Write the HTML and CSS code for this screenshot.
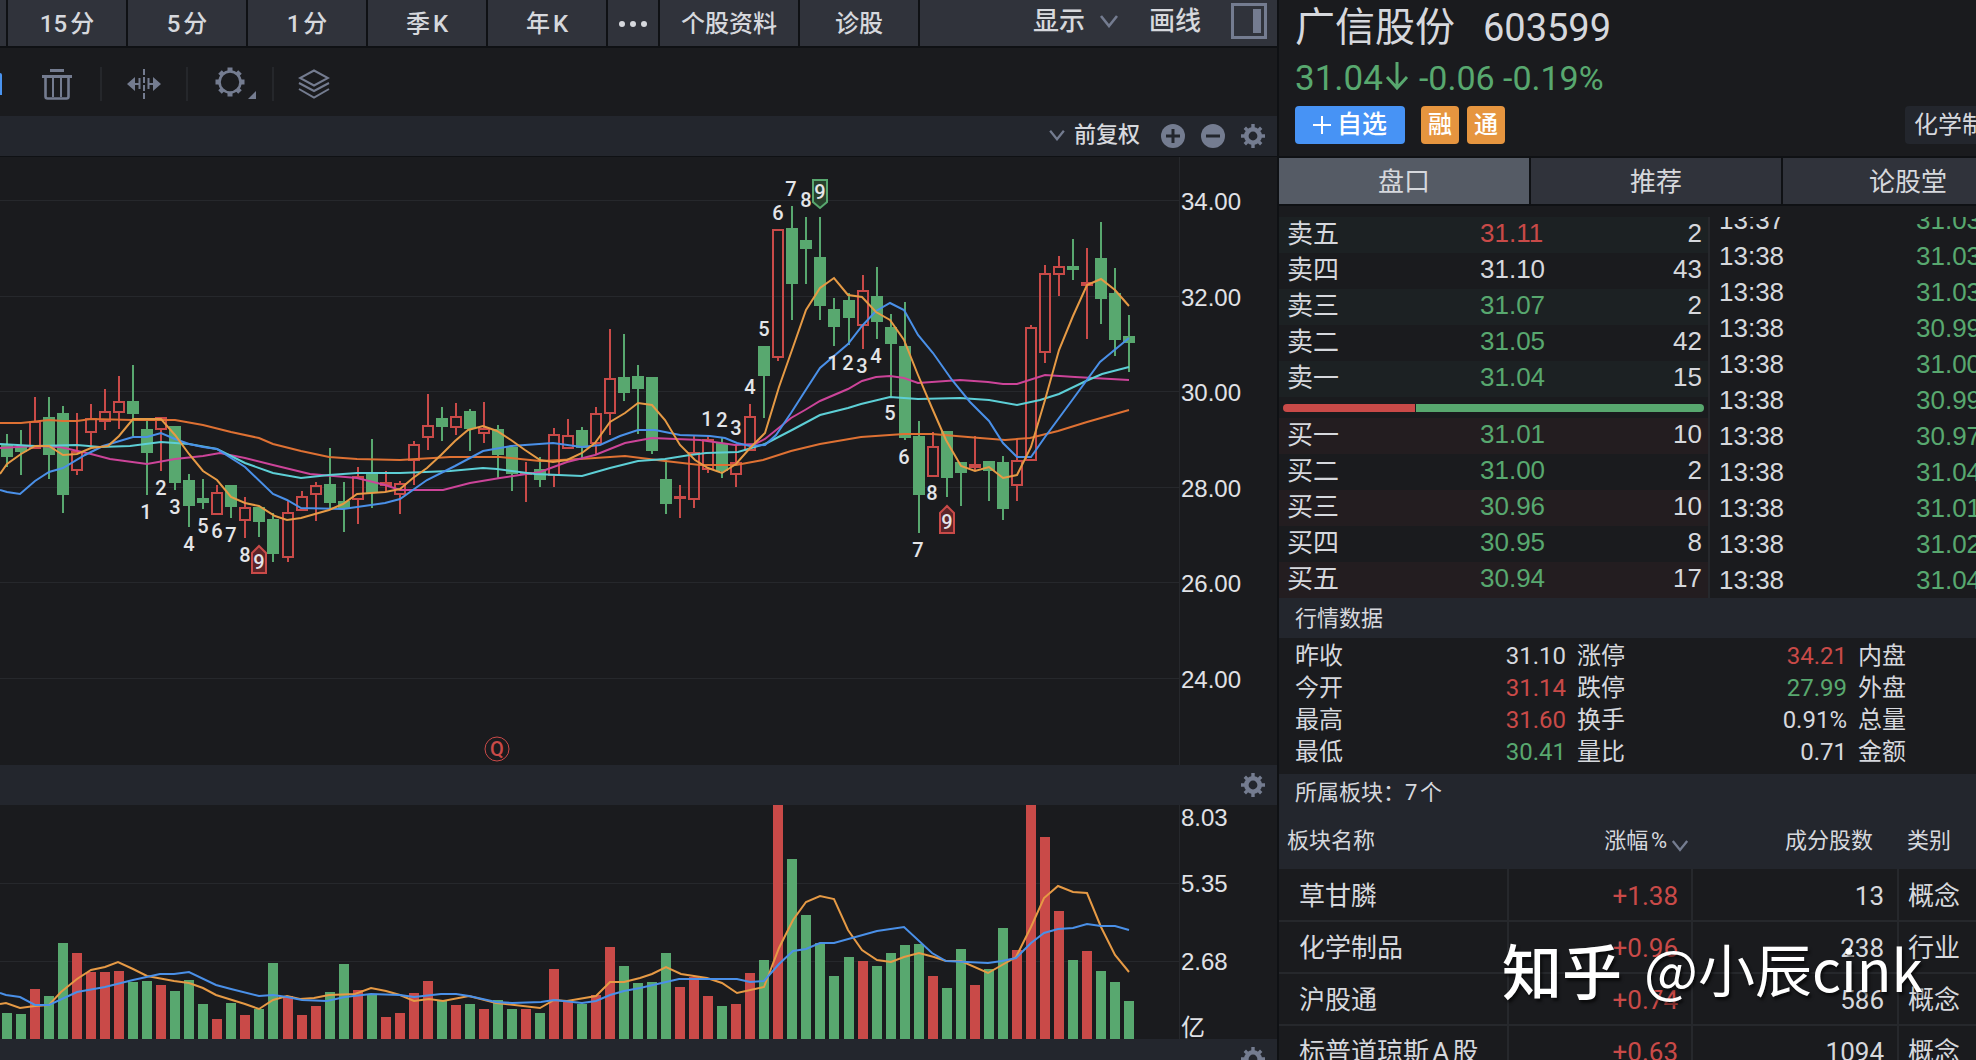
FILE: index.html
```html
<!DOCTYPE html>
<html lang="zh-CN">
<head>
<meta charset="utf-8">
<title>广信股份 603599</title>
<link rel="stylesheet" href="styles.css">
</head>
<body>
<svg class="defs" aria-hidden="true">
  <symbol id="gear" viewBox="-12 -12 24 24">
    <circle r="6.7" fill="none" stroke="currentColor" stroke-width="4.6"/>
    <g stroke="currentColor" stroke-width="3.4">
      <path d="M0-12V-8M0 12V8M-12 0H-8M12 0H8M-8.2-8.2L-5.6-5.6M8.2 8.2L5.6 5.6M-8.2 8.2L-5.6 5.6M8.2-8.2L5.6-5.6"/>
    </g>
  </symbol>
  <symbol id="chevron" viewBox="0 0 20 14">
    <path d="M2 2L10 12L18 2" fill="none" stroke="currentColor" stroke-width="2.6"/>
  </symbol>
</svg>
<div class="app">
  <main class="chart-side">
    <nav class="periods">
      <button class="period sliver" aria-label="更短周期"></button>
      <button class="period">15分</button>
      <button class="period">5分</button>
      <button class="period">1分</button>
      <button class="period">季K</button>
      <button class="period">年K</button>
      <button class="period more" aria-label="更多"><svg width="30" height="8" viewBox="0 0 30 8"><g fill="currentColor"><circle cx="4" cy="4" r="3"/><circle cx="15" cy="4" r="3"/><circle cx="26" cy="4" r="3"/></g></svg></button>
      <button class="period wide">个股资料</button>
      <button class="period">诊股</button>
      <div class="view-tools">
        <button class="plain">显示<svg class="chev" width="20" height="14"><use href="#chevron"/></svg></button>
        <button class="plain">画线</button>
        <button class="plain panel-toggle" aria-label="侧栏"><svg width="36" height="36" viewBox="0 0 36 36"><rect x="1.5" y="1.5" width="33" height="33" fill="none" stroke="currentColor" stroke-width="3"/><rect x="22" y="6" width="8" height="24" fill="currentColor"/></svg></button>
      </div>
    </nav>
    <div class="drawbar">
      <span class="active-tool"></span>
      <button class="tool" aria-label="删除"><svg width="32" height="32" viewBox="0 0 32 32" fill="none" stroke="currentColor"><path d="M9 2.5H23" stroke-width="3"/><path d="M1 8.5H31" stroke-width="3"/><path d="M4.5 9V28.5Q4.5 30.5 6.500 30.5H25.500Q27.500 30.5 27.500 28.500V9" stroke-width="2.600"/><path d="M12 10V29M20 10V29" stroke-width="2"/></svg></button>
      <button class="tool" aria-label="缩放区间"><svg width="34" height="32" viewBox="0 0 34 32" fill="none" stroke="currentColor" stroke-width="2"><path d="M17 1V31" stroke-dasharray="6 2"/><path d="M8 16H13M12.500 10V21M21 16H26M21.500 10V21"/><path d="M0 16L8 9V23ZM34 16L26 9V23Z" fill="currentColor" stroke="none"/></svg></button>
      <button class="tool" aria-label="设置"><svg width="42" height="34" viewBox="0 0 42 34"><g transform="translate(15 15)" fill="none" stroke="currentColor"><circle r="10.500" stroke-width="2.600"/><path stroke-width="5" d="M0-14.500V-10M0 14.500V10M-14.500 0H-10M14.500 0H10M-10-10L-7.500-7.500M10 10L7.500 7.500M-10 10L-7.500 7.500M10-10L7.500-7.500"/></g><path d="M41 24V32H33Z" fill="currentColor"/></svg></button>
      <button class="tool" aria-label="图层"><svg width="32" height="30" viewBox="0 0 32 30" fill="none" stroke="currentColor" stroke-width="2"><path d="M16 1.500L30 9L16 16.500L2 9Z"/><path d="M1 14L16 22L31 14M1 20L16 28.500L31 20"/></svg></button>
    </div>
    <div class="band">
      <button class="plain adjust"><svg width="18" height="12"><use href="#chevron"/></svg>前复权</button>
      <button class="plain" aria-label="放大"><svg width="24" height="24" viewBox="0 0 24 24"><circle cx="12" cy="12" r="12" fill="currentColor"/><path d="M5 12H19M12 5V19" stroke="#23262d" stroke-width="3"/></svg></button>
      <button class="plain" aria-label="缩小"><svg width="24" height="24" viewBox="0 0 24 24"><circle cx="12" cy="12" r="12" fill="currentColor"/><path d="M5 12H19" stroke="#23262d" stroke-width="3"/></svg></button>
      <button class="plain" aria-label="K线设置"><svg width="24" height="24"><use href="#gear"/></svg></button>
    </div>
    <svg class="chart" id="price" viewBox="0 157 1277 608" role="img" aria-label="日K线"></svg>
    <div class="band">
      <button class="plain" aria-label="成交量设置"><svg width="24" height="24"><use href="#gear"/></svg></button>
    </div>
    <svg class="chart" id="volume" viewBox="0 805 1277 234" role="img" aria-label="成交量"></svg>
    <div class="band">
      <button class="plain" aria-label="指标设置"><svg width="24" height="24"><use href="#gear"/></svg></button>
    </div>
  </main>

  <aside class="quote">
    <header class="stock">
      <h1>广信股份 <span class="code">603599</span></h1>
      <p class="price down"><span class="last">31.04<svg width="24" height="28" viewBox="0 0 24 28" fill="none" stroke="currentColor" stroke-width="3"><path d="M12 0V25M2 15L12 26L22 15"/></svg></span><span>-0.06 -0.19%</span></p>
      <div class="badges">
        <button class="watch"><svg width="18" height="18" viewBox="0 0 18 18" stroke="currentColor" stroke-width="2"><path d="M0 9H18M9 0V18"/></svg>自选</button>
        <span class="flag">融</span>
        <span class="flag">通</span>
        <a class="industry" href="#boards">化学制品</a>
      </div>
    </header>
    <nav class="tabs">
      <button class="tab current">盘口</button>
      <button class="tab">推荐</button>
      <button class="tab">论股堂</button>
    </nav>
    <div class="depth">
      <div class="orders">
        <table class="book sell">
          <tr><th scope="row">卖五</th><td class="up">31.11</td><td>2</td></tr>
          <tr><th scope="row">卖四</th><td>31.10</td><td>43</td></tr>
          <tr><th scope="row">卖三</th><td class="down">31.07</td><td>2</td></tr>
          <tr><th scope="row">卖二</th><td class="down">31.05</td><td>42</td></tr>
          <tr><th scope="row">卖一</th><td class="down">31.04</td><td>15</td></tr>
        </table>
        <div class="ratio"><span class="bid" style="width:31.400%"></span><span class="ask"></span></div>
        <table class="book buy">
          <tr><th scope="row">买一</th><td class="down">31.01</td><td>10</td></tr>
          <tr><th scope="row">买二</th><td class="down">31.00</td><td>2</td></tr>
          <tr><th scope="row">买三</th><td class="down">30.96</td><td>10</td></tr>
          <tr><th scope="row">买四</th><td class="down">30.95</td><td>8</td></tr>
          <tr><th scope="row">买五</th><td class="down">30.94</td><td>17</td></tr>
        </table>
      </div>
      <div class="ticks">
        <table>
          <tr><td>13:37</td><td class="down">31.03</td></tr>
          <tr><td>13:38</td><td class="down">31.03</td></tr>
          <tr><td>13:38</td><td class="down">31.03</td></tr>
          <tr><td>13:38</td><td class="down">30.99</td></tr>
          <tr><td>13:38</td><td class="down">31.00</td></tr>
          <tr><td>13:38</td><td class="down">30.99</td></tr>
          <tr><td>13:38</td><td class="down">30.97</td></tr>
          <tr><td>13:38</td><td class="down">31.04</td></tr>
          <tr><td>13:38</td><td class="down">31.01</td></tr>
          <tr><td>13:38</td><td class="down">31.02</td></tr>
          <tr><td>13:38</td><td class="down">31.04</td></tr>
        </table>
      </div>
    </div>
    <h2>行情数据</h2>
    <dl class="stats">
      <div><dt>昨收</dt><dd>31.10</dd></div><div><dt>涨停</dt><dd class="up">34.21</dd></div><div><dt>内盘</dt></div>
      <div><dt>今开</dt><dd class="up">31.14</dd></div><div><dt>跌停</dt><dd class="down">27.99</dd></div><div><dt>外盘</dt></div>
      <div><dt>最高</dt><dd class="up">31.60</dd></div><div><dt>换手</dt><dd>0.91%</dd></div><div><dt>总量</dt></div>
      <div><dt>最低</dt><dd class="down">30.41</dd></div><div><dt>量比</dt><dd>0.71</dd></div><div><dt>金额</dt></div>
    </dl>
    <section class="boards" id="boards">
      <h2>所属板块：7个</h2>
      <table>
        <thead>
          <tr><th>板块名称</th><th>涨幅%<svg width="18" height="13"><use href="#chevron"/></svg></th><th>成分股数</th><th>类别</th></tr>
        </thead>
        <tbody>
          <tr><td>草甘膦</td><td class="up">+1.38</td><td>13</td><td>概念</td></tr>
          <tr><td>化学制品</td><td class="up">+0.96</td><td>238</td><td>行业</td></tr>
          <tr><td>沪股通</td><td class="up">+0.74</td><td>586</td><td>概念</td></tr>
          <tr><td>标普道琼斯A股</td><td class="up">+0.63</td><td>1094</td><td>概念</td></tr>
        </tbody>
      </table>
    </section>
    <div class="watermark"><b>知乎</b><span>@小辰cink</span></div>
  </aside>
</div>
<script src="chart.js"></script>
</body>
</html>
```
FILE: styles.css
```css
:root {
  --bg: #1a1b1e;
  --band: #23262d;
  --bar: #30333b;
  --line: #0f1114;
  --text: #d6d8dd;
  --icon: #747c90;
  --green: #58a86f;
  --red: #c94a48;
  --sans: Roboto, "Noto Sans CJK SC", sans-serif;
  --num: "Liberation Sans", "Noto Sans CJK SC", sans-serif;
}
* { box-sizing: border-box; }
html, body { margin: 0; height: 100%; overflow: hidden; }
body { background: var(--bg); color: var(--text); font: 24px/32px var(--sans); text-autospace: normal; }
button { margin: 0; padding: 0; border: 0; background: none; color: inherit; font: inherit; white-space: nowrap; }
svg { display: block; }
table { border-collapse: collapse; border-spacing: 0; }
th { font-weight: 400; text-align: left; }
th, td { padding: 0; white-space: nowrap; }
h1, h2, p, dl, dt, dd { margin: 0; font-weight: 400; }
.defs { position: absolute; width: 0; height: 0; }
.up { color: var(--red); }
.down { color: var(--green); }

.app { display: grid; grid-template-columns: minmax(0, 1279fr) minmax(0, 697fr); height: 100vh; overflow: hidden; }
.chart-side { border-right: 2px solid var(--line); min-width: 0; }

.periods { display: flex; gap: 2px; height: 48px; background: var(--line); border-bottom: 2px solid var(--line); font-weight: 500; }
.period { width: 118px; padding-top: 2px; background: var(--bar); display: flex; align-items: center; justify-content: center; }
.period.sliver { width: 6px; }
.period.more { width: 50px; }
.period.wide { width: 138px; }
.view-tools { flex: 1; display: flex; align-items: center; justify-content: flex-end; gap: 30px; padding: 0 10px 4px 0; background: var(--bar); font-size: 26px; }
.plain { display: flex; align-items: center; }
.chev { margin-left: 14px; color: var(--icon); }
.panel-toggle, .band .plain svg { color: var(--icon); }

.drawbar { display: flex; align-items: center; height: 68px; padding-top: 3px; }
.active-tool { width: 2px; height: 22px; background: #4a94f0; border-radius: 0 8px 0 0; }
.tool { width: 86px; height: 34px; display: flex; align-items: center; justify-content: center; color: var(--icon); border-left: 2px solid #25272b; }
.tool:nth-child(2) { width: 98px; padding-left: 12px; border: 0; }
.tool:nth-child(4) { padding-left: 12px; }
.tool:nth-child(5) { padding-right: 4px; }

.band { display: flex; align-items: center; justify-content: flex-end; gap: 16px; height: 40px; padding-right: 12px; background: var(--band); }
.adjust { gap: 8px; margin-right: 5px; padding-bottom: 2px; font-size: 22px; font-weight: 500; }
.drawbar + .band { height: 41px; border-bottom: 1px solid var(--line); }
.chart { width: 100%; height: auto; }
.grid { stroke: #26282c; stroke-width: 1; }
.axis { fill: #e0e2e6; font: 24px var(--num); }
.count { fill: #e4e5e8; font: 500 20px var(--sans); text-anchor: middle; }
.line { fill: none; stroke-width: 2; }

.quote { position: relative; min-width: 0; overflow: hidden; }
.stock { height: 158px; padding: 4px 0 0 16px; border-bottom: 2px solid var(--line); }
h1 { font-size: 40px; line-height: 48px; white-space: nowrap; }
.code { margin-left: 18px; font-size: 38px; }
.price { display: flex; align-items: baseline; gap: 10px; height: 54px; font-size: 34px; line-height: 52px; white-space: nowrap; }
.last { display: flex; align-items: baseline; gap: 2px; font-size: 35px; }
.badges { display: flex; gap: 8px; height: 38px; line-height: 38px; }
.badges > * { flex: none; }
.watch { display: flex; align-items: center; justify-content: center; gap: 6px; width: 110px; margin-right: 8px; border-radius: 4px; background: #4793f5; color: #fff; font-size: 25px; font-weight: 500; }
.flag { width: 38px; border-radius: 4px; background: #e6953f; color: #fff; font-weight: 500; text-align: center; }
.industry { margin-left: 392px; padding: 0 9px; border-radius: 4px; background: var(--band); color: inherit; text-decoration: none; white-space: nowrap; }

.tabs { display: flex; gap: 2px; height: 48px; background: var(--line); border-bottom: 2px solid var(--line); font-size: 26px; }
.tab { flex: 0 0 250px; padding-top: 2px; background: var(--bar); }
.tab.current { background: #555b65; }

.depth { display: grid; grid-template-columns: 431px minmax(0, 1fr); font: 26px/36px var(--num); padding-top: 11px; }
.orders { border-right: 2px solid #26282c; }
.book { width: 100%; table-layout: fixed; }
.book tr { height: 36px; vertical-align: top; }
.book th { width: 201px; padding-left: 8px; line-height: 34px; }
.book td { line-height: 32px; }
.book td:last-child { padding-right: 6px; text-align: right; }
.sell tr:nth-child(odd) { background: #1c2123; }
.buy tr:nth-child(odd) { background: #231d20; }
.ratio { display: flex; gap: 1px; height: 21px; padding: 7px 4px 6px; }
.bid { background: var(--red); border-radius: 4px 0 0 4px; }
.ask { flex: 1; background: var(--green); border-radius: 0 4px 4px 0; }
.ticks { display: flex; flex-direction: column; justify-content: flex-end; max-height: 381px; overflow: hidden; padding-left: 9px; }
.ticks tr { height: 36px; }
.ticks td:first-child { width: 197px; }
.ticks table { flex: none; width: 262px; table-layout: fixed; }

h2 { height: 40px; padding-left: 16px; background: var(--band); font-size: 22px; line-height: 41px; }
.stats { display: grid; grid-template-columns: 271px 270px 1fr; column-gap: 11px; padding: 2px 0 6px 16px; }
.stats div { display: flex; justify-content: space-between; height: 32px; }
.boards h2 { line-height: 37px; }
.boards table { width: 760px; table-layout: fixed; font-size: 26px; }
.boards thead { background: var(--band); font-size: 22px; }
.boards thead tr { height: 55px; vertical-align: top; }
.boards thead th { padding-top: 11px; }
.boards th:nth-child(1) { width: 229px; padding-left: 8px; }
.boards th:nth-child(2) { width: 184px; padding-right: 3px; text-align: right; }
.boards th:nth-child(3) { width: 206px; padding-right: 25px; text-align: right; }
.boards th:nth-child(4) { padding-left: 9px; }
.boards th svg { display: inline-block; margin-left: 4px; vertical-align: -4px; color: var(--icon); }
.boards tbody tr { height: 52px; border-bottom: 2px solid #26282c; }
.boards tbody td { padding-top: 2px; }
.boards td + td { border-left: 2px solid #26282c; }
.boards td:nth-child(1) { padding-left: 20px; }
.boards td:nth-child(2), .boards td:nth-child(3) { padding-right: 13px; text-align: right; }
.boards td:nth-child(4) { padding-left: 9px; }

.watermark { position: absolute; right: 53px; bottom: 72px; display: flex; gap: 22px; color: #fff; font: 57px/72px "Noto Sans CJK SC", sans-serif; text-shadow: 2px 3px 3px rgba(0, 0, 0, .6); white-space: nowrap; text-autospace: no-autospace; }
.watermark b { font-size: 60px; line-height: 76px; font-weight: 500; }
```
FILE: chart.js
```js
const GREEN = '#58a86f', RED = '#c94a48';
const PITCH = 14.025, FIRST = 7;
const cx = i => Math.round(FIRST + i * PITCH);

// colour, high, body top, body bottom, low, volume top
const days = `
g 434 445 457 467 1013|g 430 447 452 475 1014|r 397 422 448 448 989|g 397 417 455 479 996
g 406 413 495 513 943|r 413 452 470 475 953|r 404 419 432 447 972|r 389 412 421 430 972
r 376 402 412 429 971|g 365 401 414 436 982|g 421 429 453 495 981|r 417 418 429 471 985
g 426 426 483 490 991|g 474 480 506 527 980|g 479 498 503 509 1004|r 485 493 514 514 1019
g 485 485 507 518 1003|r 497 508 520 538 1015|g 507 507 522 537 1009|g 513 519 554 562 963
r 500 513 557 562 996|r 491 497 510 510 1015|r 482 486 494 521 1006|g 448 484 503 509 992
g 482 501 509 532 964|r 467 477 499 524 990|g 439 473 493 508 995|r 471 483 485 492 1017
r 481 484 494 514 1013|r 441 445 460 485 993|r 394 426 437 450 981|g 407 418 427 441 1001
r 403 417 427 435 1005|g 409 411 429 451 1004|r 402 429 433 443 1009|g 425 429 455 478 1000
g 446 447 474 491 1009|r 462 473 474 502 1009|g 457 469 480 487 1013|r 428 435 475 487 969
r 419 436 448 448 1002|g 427 430 448 458 1004|r 407 414 443 454 995|r 329 379 413 435 947
g 334 377 393 401 966|g 365 376 389 434 983|g 377 377 451 454 982|g 460 479 504 514 953
r 485 497 498 518 987|r 436 453 499 508 977|r 436 440 469 473 996|g 437 443 471 478 1006
r 445 463 474 487 1004|r 404 417 450 450 973|g 346 346 376 418 960|r 229 230 357 361 805
g 206 228 284 320 859|g 217 240 249 284 915|g 217 257 306 320 943|g 298 309 327 346 976
g 293 300 318 345 957|r 275 291 325 349 961|g 267 296 322 339 966|g 314 327 344 397 953
g 302 346 438 440 945|g 421 436 495 533 944|r 432 447 476 476 976|g 431 431 478 497 988
g 462 462 473 506 949|r 436 465 467 471 985|g 461 461 471 501 969|g 456 462 509 520 928
r 438 461 485 501 950|r 325 328 460 460 805|r 265 274 352 363 837|r 256 267 274 296 911
g 239 266 270 280 960|r 248 283 285 339 951|g 222 258 299 324 971|g 268 293 340 356 982
g 315 336 343 372 1001`.trim().split(/[|\n]/).map(s => s.split(' '));

const averages = {
  '#de7133': '0,423 21,423 49,420 63,421 77,421 91,419 133,420 175,420 203,425 231,432 259,438 273,444 301,451 329,457 357,459 400,460 450,457 500,457 540,461 580,459 625,456 665,461 700,465 736,465 763,460 791,451 820,444 861,437 904,434 932,434 980,438 1005,440 1030,438 1058,431 1087,422 1129,410',
  '#cc4499': '0,448 35,446 60,447 91,454 110,459 147,464 175,459 203,456 220,453 245,458 273,465 310,474 357,478 385,485 400,490 443,490 470,483 500,478 540,472 567,462 595,455 625,443 652,438 700,440 735,445 755,444 765,439 791,418 805,410 820,401 848,389 862,381 876,377 890,376 904,378 918,383 960,380 988,382 1003,384 1017,384 1045,375 1075,377 1129,380',
  '#5dcfd6': '0,444 35,446 77,445 100,447 130,446 161,442 189,444 217,449 245,463 273,473 301,478 329,475 357,473 400,473 450,471 483,468 497,469 535,474 582,476 610,468 638,461 665,459 690,455 706,453 738,452 765,444 792,430 820,415 848,408 861,404 890,397 918,399 960,398 989,400 1017,405 1040,400 1059,394 1086,381 1102,374 1129,367',
  '#4a90e8': '0,490 7,492 20,494 35,481 49,472 63,468 85,455 103,446 133,437 147,437 161,433 175,439 189,444 203,447 217,449 245,467 273,494 287,500 301,508 343,509 385,503 400,499 427,480 455,466 483,451 511,446 553,443 582,447 600,445 620,436 638,430 655,430 680,435 710,436 725,438 737,443 750,446 765,445 776,435 791,413 807,388 820,368 848,344 862,326 876,311 890,303 904,310 918,335 933,353 952,380 970,402 989,421 1003,443 1017,457 1031,457 1045,437 1073,399 1100,362 1129,338',
  '#e69a45': '0,474 7,464 21,454 35,446 49,446 63,455 77,454 91,448 108,446 119,436 133,419 161,419 175,435 189,454 203,471 217,480 231,497 245,503 259,506 275,516 287,520 301,518 329,510 343,504 357,494 385,492 400,489 413,478 427,468 441,455 455,441 468,430 483,426 497,431 511,440 525,450 540,460 553,462 567,460 582,453 595,443 610,422 625,413 638,403 652,405 665,420 680,445 695,460 708,468 722,473 736,464 750,448 765,433 779,387 792,350 806,310 820,288 834,278 848,295 862,297 876,312 890,320 904,340 918,375 932,408 946,440 961,466 975,471 989,467 1003,478 1017,475 1031,447 1045,400 1059,350 1073,316 1087,285 1101,279 1115,290 1129,306'
};
const volumeAverages = {
  '#e69a45': '0,1004 6,1003 20,1008 35,1006 49,1005 61,992 77,979 91,970 105,967 118,962 133,969 147,976 174,981 189,983 203,988 216,995 245,1004 259,1009 273,1000 287,996 300,999 314,998 329,995 355,994 371,988 386,991 400,995 414,1001 429,999 443,1001 469,996 496,1003 540,1008 554,1000 567,1001 596,996 610,982 624,982 640,978 652,974 666,967 681,974 707,978 722,983 737,993 764,987 779,948 793,920 806,902 820,896 834,899 848,930 862,950 877,960 891,962 904,957 919,953 934,957 946,961 961,961 988,973 1016,957 1031,927 1044,898 1058,886 1073,892 1087,893 1101,927 1115,955 1129,972',
  '#4a90e8': '0,993 6,995 20,997 35,1005 49,1005 77,992 105,987 133,980 160,974 174,974 189,972 216,985 231,989 259,996 273,995 287,997 302,1000 327,1001 345,997 371,994 400,995 414,997 441,994 456,994 469,996 496,1002 512,1003 541,1002 554,1000 582,1003 596,1001 610,995 624,991 640,988 679,979 737,979 750,982 764,981 779,964 793,951 806,949 820,943 834,943 877,931 904,927 932,953 946,961 988,963 1002,961 1016,958 1031,943 1044,933 1058,929 1073,928 1087,924 1101,926 1115,926 1129,930'
};

// digit, centre x, baseline
const counts = [[1,146,519],[2,161,495],[3,175,514],[4,189,551],[5,203,533],[6,217,538],[7,231,542],[8,245,562],[9,259,569],
  [1,707,426],[2,722,427],[3,736,435],[4,750,394],[5,764,336],[6,778,220],[7,791,196],[8,806,207],[9,820,199],
  [1,833,370],[2,848,370],[3,862,373],[4,876,363],[5,890,420],[6,904,464],[7,918,557],[8,932,500],[9,947,529]];

const gridline = y => `<path class="grid" d="M0 ${y}.5H1179"/>`;
const label = (text, y) => `<text class="axis" x="1181" y="${y}">${text}</text>`;
const lines = set => Object.entries(set).map(([c, p]) => `<polyline class="line" stroke="${c}" points="${p}"/>`).join('');
const badge = (x, y, c, fill, up) => up
  ? `<path d="M${x - 7} ${y + 27}V${y + 7}L${x} ${y}L${x + 7} ${y + 7}V${y + 27}Z" fill="${fill}" stroke="${c}" stroke-width="2"/>`
  : `<path d="M${x - 7} ${y}V${y + 22}L${x} ${y + 28}L${x + 7} ${y + 22}V${y}Z" fill="${fill}" stroke="${c}" stroke-width="2"/>`;

let price = '';
[[34, 200], [32, 296], [30, 391], [28, 487], [26, 582], [24, 678]].forEach(([v, y]) => {
  price += gridline(y) + label(v.toFixed(2), y + 10);
});
price += '<path class="grid" d="M1179.500 157V765"/>';
days.forEach(([c, h, t, b, l], i) => {
  const x = cx(i);
  h = +h; t = +t; b = +b; l = +l;
  if (c === 'g') {
    price += `<path d="M${x} ${h}V${l}" stroke="${GREEN}" stroke-width="2"/><rect x="${x - 6}" y="${t}" width="12" height="${b - t}" fill="${GREEN}"/>`;
  } else {
    price += `<path d="M${x} ${h}V${t}M${x} ${b}V${l}" stroke="${RED}" stroke-width="2"/><rect x="${x - 5}" y="${t}" width="10" height="${b - t}" fill="none" stroke="${RED}" stroke-width="2"/>`;
  }
});
price += lines(averages);
price += badge(259, 546, RED, '#5c2428', true) + badge(947, 506, RED, '#5c2428', true) + badge(820, 180, GREEN, '#28402c', false);
price += counts.map(([n, x, y]) => `<text class="count" x="${x}" y="${y}">${n}</text>`).join('');
price += `<circle cx="497" cy="749" r="12" fill="none" stroke="${RED}" stroke-width="1"/><text class="count" x="497" y="756" style="fill:${RED}">Q</text>`;
document.getElementById('price').innerHTML = price;

let volume = gridline(883) + gridline(961) + '<path class="grid" d="M1179.500 805V1039"/>';
days.forEach((d, i) => {
  volume += `<rect x="${cx(i) - 5}" y="${d[5]}" width="10" height="${1039 - d[5]}" fill="${d[0] === 'g' ? GREEN : RED}"/>`;
});
volume += lines(volumeAverages) + label('8.03', 826) + label('5.35', 892) + label('2.68', 970) + label('亿', 1036);
document.getElementById('volume').innerHTML = volume;
```
